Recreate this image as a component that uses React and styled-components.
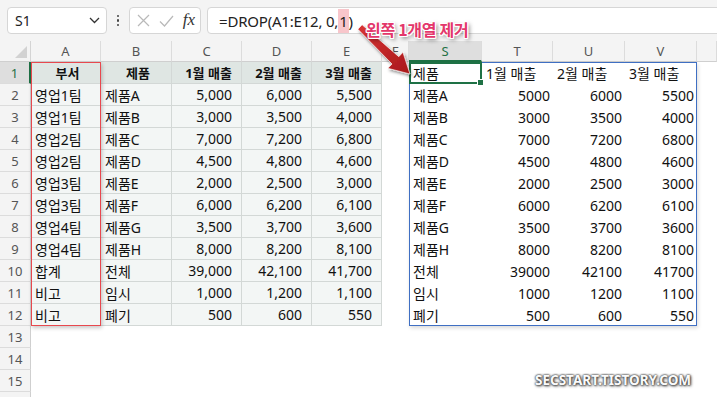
import React from "react";
import styled, { createGlobalStyle } from "styled-components";

const GlobalStyle = createGlobalStyle`
  html, body {
    margin: 0;
    padding: 0;
    background: #fff;
    overflow: hidden;
  }
  body {
    font-family: "Noto Sans", "Noto Sans CJK KR", sans-serif;
    color: #111;
  }
`;

const Screen = styled.div`
  position: relative;
  width: 717px;
  height: 397px;
  overflow: hidden;
  background: #fff;
`;

/* ---------- formula bar ---------- */

const TopBar = styled.div`
  height: 41px;
  display: flex;
  align-items: center;
  padding-left: 7px;
  background: #f4f4f4;
  box-sizing: border-box;
`;

const Box = styled.div`
  height: 27px;
  box-sizing: border-box;
  background: #fff;
  border: 1px solid #d6d6d6;
  border-radius: 4px;
  display: flex;
  align-items: center;
`;

const NameBox = styled(Box)`
  width: 100px;
  padding: 0 6px 0 7px;
  justify-content: space-between;
  font-size: 14px;
  color: #222;
`;

const Dots = styled.div`
  width: 22px;
  display: flex;
  flex-direction: column;
  align-items: center;
  gap: 2px;
  span {
    width: 2.5px;
    height: 2.5px;
    border-radius: 50%;
    background: #444;
  }
`;

const FxBox = styled(Box)`
  width: 72px;
  padding: 0 5px 0 7px;
  justify-content: space-between;
`;

const Fx = styled.span`
  font-family: "Liberation Serif", serif;
  font-style: italic;
  font-size: 17px;
  color: #333;
  margin-top: -2px;
`;

const FormulaBox = styled(Box)`
  flex: 1;
  margin-left: 6px;
  margin-right: -6px;
  padding-left: 11px;
  font-size: 15px;
  letter-spacing: -0.2px;
  color: #222;
`;

const Mark = styled.span`
  background: #f8c6cb;
  padding: 2px 1px;
`;

/* ---------- sheet grid ---------- */

const Sheet = styled.div`
  display: grid;
  grid-template-columns: 31px 70px 71px 70px 70px 70px 27px 73px 71px 72px 72px 1fr;
  grid-template-rows: 21px repeat(16, 22px);
`;

const Placed = styled.div`
  grid-row: ${(p) => p.$r} / span ${(p) => p.$rs || 1};
  grid-column: ${(p) => p.$c} / span ${(p) => p.$cs || 1};
  box-sizing: border-box;
`;

const Corner = styled(Placed)`
  background: #f4f4f4;
  border-right: 1px solid #d4d4d4;
  border-bottom: 1px solid #cfcfcf;
  position: relative;
  &::after {
    content: "";
    position: absolute;
    right: 3px;
    bottom: 3px;
    border-left: 12px solid transparent;
    border-bottom: 12px solid #d2d2d2;
  }
`;

const ColHead = styled(Placed)`
  display: flex;
  align-items: center;
  justify-content: center;
  font-size: 13px;
  background: ${(p) => (p.$sel ? "#dedede" : "#f4f4f4")};
  color: ${(p) => (p.$sel ? "#1e7145" : "#555")};
  border-right: 1px solid #dcdcdc;
  border-bottom: ${(p) => (p.$sel ? "2px solid #1e7145" : "1px solid #cfcfcf")};
`;

const RowHead = styled(Placed)`
  display: flex;
  align-items: center;
  justify-content: center;
  font-size: 13px;
  background: ${(p) => (p.$sel ? "#dedede" : "#f4f4f4")};
  color: ${(p) => (p.$sel ? "#1e7145" : "#555")};
  border-bottom: 1px solid #dcdcdc;
  border-right: ${(p) => (p.$sel ? "2px solid #1e7145" : "1px solid #cfcfcf")};
`;

const Cell = styled(Placed)`
  display: flex;
  align-items: center;
  justify-content: ${(p) =>
    p.$align === "right" ? "flex-end" : p.$align === "center" ? "center" : "flex-start"};
  padding: ${(p) => (p.$align === "right" ? "0 9px 0 0" : "0 0 0 4px")};
  font-size: ${(p) => (p.$bold ? "13px" : "14px")};
  font-weight: ${(p) => (p.$bold ? 700 : 400)};
  background: ${(p) => (p.$bold ? "#dfe6e3" : "#f3f6f5")};
  border-right: 1px solid #d3d8d6;
  border-bottom: 1px solid #d3d8d6;
  white-space: nowrap;
`;

const SpillCell = styled(Placed)`
  display: flex;
  align-items: center;
  justify-content: ${(p) => (p.$align === "right" ? "flex-end" : "flex-start")};
  padding: ${(p) => (p.$align === "right" ? "0 3px 0 0" : "0 0 0 4px")};
  font-size: 14px;
  white-space: nowrap;
`;

const RedFrame = styled(Placed)`
  border: 1.5px solid #e8484e;
  box-shadow: 1px 2px 4px rgba(0, 0, 0, 0.22);
  pointer-events: none;
  z-index: 2;
`;

const SpillFrame = styled(Placed)`
  border: 1px solid #3f6fc3;
  box-shadow: 1px 2px 4px rgba(0, 0, 0, 0.15);
  pointer-events: none;
  z-index: 2;
`;

const SelFrame = styled(Placed)`
  border: 2px solid #1e7145;
  pointer-events: none;
  position: relative;
  z-index: 3;
  &::after {
    content: "";
    position: absolute;
    right: -4px;
    bottom: -4px;
    width: 5px;
    height: 5px;
    background: #1e7145;
    border: 1px solid #fff;
  }
`;

/* ---------- annotation overlays ---------- */

const Callout = styled.div`
  position: absolute;
  left: 366px;
  top: 17px;
  font-family: "Noto Sans CJK KR", sans-serif;
  font-weight: 700;
  font-size: 16px;
  letter-spacing: -0.3px;
  color: #e3376b;
  white-space: nowrap;
  z-index: 5;
  text-shadow: 1px 0 0 #fff, -1px 0 0 #fff, 0 1px 0 #fff, 0 -1px 0 #fff,
    1px 1px 0 #fff, -1px -1px 0 #fff, 1px -1px 0 #fff, -1px 1px 0 #fff,
    2px 2px 4px rgba(0, 0, 0, 0.6);
`;

const ArrowSvg = styled.svg`
  position: absolute;
  left: 352px;
  top: 19px;
  z-index: 4;
  overflow: visible;
`;

const Watermark = styled.div`
  position: absolute;
  left: 535px;
  top: 371px;
  font-family: "Noto Sans", sans-serif;
  font-weight: 700;
  font-size: 13.5px;
  letter-spacing: 0;
  color: #fafafa;
  text-shadow: 0 0 2px #444, 0 0 2px #444, 1px 1px 3px #333;
`;

const cols = ["A", "B", "C", "D", "E", "F", "S", "T", "U", "V", ""];

const rows = [
  ["부서", "제품", "1월 매출", "2월 매출", "3월 매출"],
  ["영업1팀", "제품A", 5000, 6000, 5500],
  ["영업1팀", "제품B", 3000, 3500, 4000],
  ["영업2팀", "제품C", 7000, 7200, 6800],
  ["영업2팀", "제품D", 4500, 4800, 4600],
  ["영업3팀", "제품E", 2000, 2500, 3000],
  ["영업3팀", "제품F", 6000, 6200, 6100],
  ["영업4팀", "제품G", 3500, 3700, 3600],
  ["영업4팀", "제품H", 8000, 8200, 8100],
  ["합계", "전체", 39000, 42100, 41700],
  ["비고", "임시", 1000, 1200, 1100],
  ["비고", "폐기", 500, 600, 550],
];

const Chevron = () => (
  <svg width="11" height="7" viewBox="0 0 11 7">
    <path d="M1 1l4.5 4.5L10 1" fill="none" stroke="#333" strokeWidth="1.3" />
  </svg>
);

const Cross = () => (
  <svg width="13" height="13" viewBox="0 0 13 13">
    <path d="M1 1l11 11M12 1L1 12" stroke="#b9b9b9" strokeWidth="1.2" />
  </svg>
);

const Check = () => (
  <svg width="15" height="12" viewBox="0 0 15 12">
    <path d="M1 6.5l4.5 4.5L14 1" fill="none" stroke="#b9b9b9" strokeWidth="1.2" />
  </svg>
);

const Arrow = () => (
  <ArrowSvg width="70" height="62" viewBox="0 0 70 62">
    <defs>
      <linearGradient id="ag" x1="0" y1="0" x2="1" y2="1">
        <stop offset="0" stopColor="#d93333" />
        <stop offset="1" stopColor="#a8191c" />
      </linearGradient>
      <filter id="as" x="-30%" y="-30%" width="160%" height="160%">
        <feDropShadow dx="1.5" dy="2" stdDeviation="1.5" floodColor="#000" floodOpacity="0.45" />
      </filter>
    </defs>
    <polygon
      points="10.1,5.8 46.8,37.7 50.9,33.3 58,55 35.9,49.3 40,45 5.9,10.2"
      fill="url(#ag)"
      stroke="#fff"
      strokeWidth="0.6"
      strokeLinejoin="round"
      filter="url(#as)"
    />
  </ArrowSvg>
);

const App = () => {
  return (
    <Screen>
      <GlobalStyle />
      <TopBar>
        <NameBox>
          <span>S1</span>
          <Chevron />
        </NameBox>
        <Dots>
          <span />
          <span />
          <span />
        </Dots>
        <FxBox>
          <Cross />
          <Check />
          <Fx>fx</Fx>
        </FxBox>
        <FormulaBox>
          =DROP(A1:E12, 0, <Mark>1</Mark>)
        </FormulaBox>
      </TopBar>

      <Sheet>
        <Corner $r={1} $c={1} />
        {cols.map((name, i) => (
          <ColHead key={"h" + i} $r={1} $c={i + 2} $sel={name === "S"}>
            {name}
          </ColHead>
        ))}
        {Array.from({ length: 16 }, (_, i) => (
          <RowHead key={"r" + i} $r={i + 2} $c={1} $sel={i === 0}>
            {i < 15 ? i + 1 : ""}
          </RowHead>
        ))}

        {rows.map((row, ri) =>
          row.map((v, ci) => {
            const head = ri === 0;
            const num = typeof v === "number";
            return (
              <Cell
                key={`c${ri}-${ci}`}
                $r={ri + 2}
                $c={ci + 2}
                $bold={head}
                $align={head ? "center" : num ? "right" : "left"}
              >
                {num ? v.toLocaleString("en-US") : v}
              </Cell>
            );
          })
        )}

        {rows.map((row, ri) =>
          row.slice(1).map((v, ci) => (
            <SpillCell
              key={`s${ri}-${ci}`}
              $r={ri + 2}
              $c={ci + 8}
              $align={typeof v === "number" ? "right" : "left"}
            >
              {v}
            </SpillCell>
          ))
        )}

        <RedFrame $r={2} $rs={12} $c={2} />
        <SpillFrame $r={2} $rs={12} $c={8} $cs={4} />
        <SelFrame $r={2} $c={8} />
      </Sheet>

      <Arrow />
      <Callout>왼쪽 1개열 제거</Callout>
      <Watermark>SECSTART.TISTORY.COM</Watermark>
    </Screen>
  );
};

export default App;
